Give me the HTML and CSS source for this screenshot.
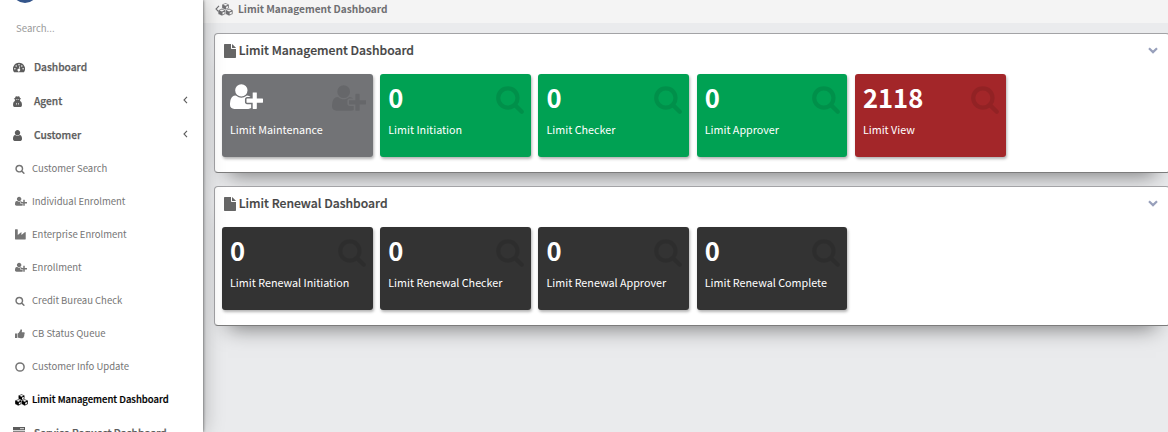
FILE: index.html
```html
<!DOCTYPE html>
<html lang="en">
<head>
<meta charset="utf-8">
<title>Limit Management Dashboard</title>
<link rel="stylesheet" href="styles.css">
</head>
<body>
<svg class="defs" aria-hidden="true">
  <symbol id="search" viewBox="0 0 1792 1792"><path d="M1216 832q0-185-131.500-316.500t-316.500-131.500-316.500 131.500-131.500 316.500 131.500 316.500 316.500 131.500 316.500-131.500 131.500-316.500zm512 832q0 52-38 90t-90 38q-54 0-90-38l-343-342q-179 124-399 124-143 0-273.500-55.500t-225-150-150-225-55.500-273.500 55.500-273.500 150-225 225-150 273.500-55.500 273.500 55.500 225 150 150 225 55.500 273.500q0 220-124 399l343 343q37 37 37 90z"/></symbol>
  <symbol id="user-plus" viewBox="0 0 2048 1792"><path d="M704 896q-159 0-271.500-112.500t-112.500-271.500 112.500-271.500 271.500-112.500 271.500 112.500 112.500 271.500-112.500 271.500-271.500 112.500zm960 128h352q13 0 22.500 9.500t9.500 22.500v192q0 13-9.500 22.500t-22.500 9.500h-352v352q0 13-9.500 22.500t-22.500 9.500h-192q-13 0-22.500-9.500t-9.500-22.500v-352h-352q-13 0-22.500-9.500t-9.500-22.500v-192q0-13 9.500-22.500t22.500-9.500h352v-352q0-13 9.500-22.500t22.500-9.500h192q13 0 22.500 9.500t9.500 22.500v352zm-736 224q0 52 38 90t90 38h256v238q-68 50-171 50h-874q-121 0-194-69t-73-190q0-53 3.500-103.500t14-109 26.500-108.500 43-97.500 62-81 85.500-53.500 111.500-20q19 0 39 17 79 61 154.500 91.500t164.500 30.500 164.500-30.500 154.500-91.500q20-17 39-17 132 0 217 96h-223q-52 0-90 38t-38 90v192z"/></symbol>
  <symbol id="user" viewBox="256 128 1280 1536"><path d="M1536 1399q0 109-62.500 187t-150.500 78h-854q-88 0-150.500-78t-62.500-187q0-85 8.500-160.500t31.500-152 58.500-131 94-89 134.500-34.500q131 128 313 128t313-128q76 0 134.500 34.500t94 89 58.500 131 31.500 152 8.500 160.500zm-256-887q0 159-112.500 271.500t-271.500 112.500-271.500-112.500-112.500-271.500 112.500-271.500 271.500-112.500 271.500 112.500 112.500 271.500z"/></symbol>
  <symbol id="gauge" viewBox="0 1.500 14 12"><path d="M7 2a7 7 0 0 0-5.900 10.800q.2.200.4.200h11q.2 0 .4-.2A7 7 0 0 0 7 2z"/><g fill="#fff"><circle cx="2.200" cy="9" r=".85"/><circle cx="3.700" cy="5.700" r=".85"/><circle cx="7" cy="4.200" r=".85"/><circle cx="10.300" cy="5.700" r=".85"/><circle cx="11.800" cy="9" r=".85"/><path d="M7.500 5.900l.8.200-.7 3a1.600 1.600 0 1 1-.9-.2z"/></g></symbol>
  <symbol id="agent" viewBox="0 0 11 13.500"><path d="M3 .8q.5-.8 1.200-.5.700.3 1.300.3T6.800.3Q7.500 0 8 .8l.5 1.800 1.600.7-1.300.7q.1 1.300-.3 2l1.200.6q1.300 1 1.300 4.300 0 2.600-1.700 2.600H1.700Q0 13.500 0 10.900 0 7.600 1.300 6.600L2.500 6q-.4-.7-.3-2L.9 3.300l1.600-.7z"/><g fill="#fff"><path d="M3.300 4.200h1.900v.8H3.700zM5.800 4.200h1.900l-.4.800H5.800zM3.800 8.400l1.200.8-.5 2.600zM7.200 8.400l-1.200.8.500 2.600z"/></g></symbol>
  <symbol id="industry" viewBox="0 0 12 12"><path d="M0 .8Q0 .4.400.4h2.200q.4 0 .4.400v5.700l4-3.200v3.200l4-3.200q.7-.1.700.4V11q0 .5-.5.500H.5Q0 11.500 0 11z"/></symbol>
  <symbol id="thumb" viewBox="0 0 11 11"><path d="M0 4.900h2.200v5H0zM2.800 5Q4 4.600 4.900 3 5.900 2 6 .8 6.100 0 7 .4q1.400.8.400 3.200h2.400q1 .1.900 1.200 0 .6-.5.900.5.700-.1 1.500.2.800-.4 1.300 0 1.600-1.600 1.600H6.600Q5 10 4 9.700H2.800z"/></symbol>
  <symbol id="circle" viewBox="0 0 10 10"><circle cx="5" cy="5" r="4.100" fill="none" stroke="currentColor" stroke-width="1.500"/></symbol>
  <symbol id="cubes" viewBox="0 0 18 16"><g stroke="var(--cube-gap)" stroke-width=".4" stroke-linejoin="round"><path d="M9 0l4.300 1.900v4.500L9 8.400 4.700 6.400V1.900z"/><path d="M4.600 6.900L9 8.800v4.700l-4.400 2.300-4.600-2.300V8.800z"/><path d="M13.400 6.900L18 8.800v4.700l-4.600 2.300L9 13.500V8.800z"/></g><path fill="var(--cube-gap)" d="M9 1l2.900 1.200L9 3.400 6.100 2.200zM9.700 4.700l2.500-1v2.200l-2.500 1.200zM4.600 8l3 1.200-3 1.300-3-1.300zM5.300 11.800l2.600-1.100v2.200l-2.600 1.400zM13.400 8l3 1.200-3 1.300-3-1.300zM14.100 11.800l2.700-1.100v2.200l-2.700 1.400z"/></symbol>
  <symbol id="server" viewBox="0 0 12 12"><path d="M0 0h12v3.200H0zM0 4.200h12v3.200H0zM0 8.400h12v3.200H0z"/><path stroke="#fff" stroke-width=".8" d="M7 1.700h4M4 5.800h7M8 10h3"/></symbol>
  <symbol id="file" viewBox="0 0 12 14"><path d="M0 .7Q0 0 .7 0H7v4.300q0 .7.700.7H12v8.300q0 .7-.7.700H.7Q0 14 0 13.300zM8 0q.3.100.6.400l3 3q.3.300.4.600H8z"/></symbol>
  <symbol id="left" viewBox="0 0 5 8"><path d="M4 .8L1 4l3 3.200" fill="none" stroke="currentColor" stroke-width="1.100"/></symbol>
  <symbol id="down" viewBox="0 0 10 7"><path d="M1 1.200l4 3.900 4-3.900" fill="none" stroke="currentColor" stroke-width="2.200"/></symbol>
</svg>
<div class="app">
  <aside class="sidebar">
    <div class="brand"><span class="logo"></span></div>
    <div class="search">Search...</div>
    <nav>
      <a class="item"><svg class="ico gauge"><use href="#gauge"/></svg><span>Dashboard</span></a>
      <a class="item"><svg class="ico agent"><use href="#agent"/></svg><span>Agent</span><svg class="left"><use href="#left"/></svg></a>
      <a class="item"><svg class="ico user"><use href="#user"/></svg><span>Customer</span><svg class="left"><use href="#left"/></svg></a>
      <a class="sub"><svg class="ico search-i"><use href="#search"/></svg><span>Customer Search</span></a>
      <a class="sub"><svg class="ico uplus"><use href="#user-plus"/></svg><span>Individual Enrolment</span></a>
      <a class="sub"><svg class="ico industry"><use href="#industry"/></svg><span>Enterprise Enrolment</span></a>
      <a class="sub"><svg class="ico uplus"><use href="#user-plus"/></svg><span>Enrollment</span></a>
      <a class="sub"><svg class="ico search-i"><use href="#search"/></svg><span>Credit Bureau Check</span></a>
      <a class="sub"><svg class="ico thumb"><use href="#thumb"/></svg><span>CB Status Queue</span></a>
      <a class="sub"><svg class="ico circle"><use href="#circle"/></svg><span>Customer Info Update</span></a>
      <a class="sub active"><svg class="ico cubes"><use href="#cubes"/></svg><span>Limit Management Dashboard</span></a>
      <a class="item"><svg class="ico server"><use href="#server"/></svg><span>Service Request Dashboard</span></a>
    </nav>
  </aside>
  <main class="main">
    <header class="topbar"><svg class="back"><use href="#left"/></svg><svg class="cubes"><use href="#cubes"/></svg><span>Limit Management Dashboard</span></header>
    <div class="content">
      <section class="panel">
        <div class="head"><svg class="file"><use href="#file"/></svg><h2>Limit Management Dashboard</h2><svg class="down"><use href="#down"/></svg></div>
        <div class="tiles">
          <div class="tile grey"><svg class="lead"><use href="#user-plus"/></svg><p>Limit Maintenance</p><svg class="ghost wide"><use href="#user-plus"/></svg></div>
          <div class="tile green"><b>0</b><p>Limit Initiation</p><svg class="ghost"><use href="#search"/></svg></div>
          <div class="tile green"><b>0</b><p>Limit Checker</p><svg class="ghost"><use href="#search"/></svg></div>
          <div class="tile green"><b>0</b><p>Limit Approver</p><svg class="ghost"><use href="#search"/></svg></div>
          <div class="tile red"><b>2118</b><p>Limit View</p><svg class="ghost"><use href="#search"/></svg></div>
        </div>
      </section>
      <section class="panel">
        <div class="head"><svg class="file"><use href="#file"/></svg><h2>Limit Renewal Dashboard</h2><svg class="down"><use href="#down"/></svg></div>
        <div class="tiles">
          <div class="tile dark"><b>0</b><p>Limit Renewal Initiation</p><svg class="ghost"><use href="#search"/></svg></div>
          <div class="tile dark"><b>0</b><p>Limit Renewal Checker</p><svg class="ghost"><use href="#search"/></svg></div>
          <div class="tile dark"><b>0</b><p>Limit Renewal Approver</p><svg class="ghost"><use href="#search"/></svg></div>
          <div class="tile dark"><b>0</b><p>Limit Renewal Complete</p><svg class="ghost"><use href="#search"/></svg></div>
        </div>
      </section>
    </div>
  </main>
</div>
</body>
</html>
```
FILE: styles.css
```css
* { box-sizing: border-box; }
body {
  margin: 0;
  overflow: hidden;
  font-family: "Noto Sans CJK SC", "Noto Sans", sans-serif;
  --cube-gap: #fff;
}
svg { fill: currentColor; flex: none; display: block; }
.defs { display: none; }
.app { display: flex; width: 1168px; height: 432px; overflow: hidden; }

.sidebar {
  flex: none;
  width: 203px;
  height: 432px;
  background: #fff;
  position: relative;
  z-index: 1;
  box-shadow: 0 0 3px rgba(0,0,0,.65), 0 0 20px rgba(0,0,0,.28);
}
.brand { height: 8px; overflow: hidden; padding-left: 12px; }
.logo { display: block; width: 26px; height: 26px; margin-top: -23px; border-radius: 50%; background: #34558b; }
.search { height: 42px; line-height: 40px; padding-left: 16px; font-size: 9.600px; color: #999; }
.item, .sub { display: flex; align-items: center; white-space: nowrap; }
.item { height: 34px; padding: 0 15px 0 13px; font-size: 10.200px; font-weight: 500; color: #5c5c5c; -webkit-text-stroke: .25px; }
.item .ico, .sub .ico { margin-right: auto; }
.item span { width: 154px; margin-top: -1px; }
.item .left { margin: -2px 0 0 -5px; }
.sub { height: 33px; padding-left: 15px; font-size: 9.500px; color: #757575; }
.sub span { width: 171px; margin-top: -1px; }
.sub.active { color: #000; font-weight: 500; -webkit-text-stroke: .2px; }
.gauge { width: 12px; height: 11px; }
.agent { width: 9px; height: 11px; }
.user { width: 9px; height: 11px; }
.search-i { width: 10px; height: 10px; }
.uplus { width: 12px; height: 10.500px; }
.industry { width: 11px; height: 11px; }
.thumb, .circle { width: 10px; height: 10px; }
.cubes { width: 13px; height: 12px; }
.server { width: 12px; height: 12px; }
.left { width: 5px; height: 8px; }

.main { flex: 1; min-width: 0; background: #eaebed; }
.topbar {
  display: flex;
  align-items: center;
  height: 23px;
  padding: 0 0 5px 12px;
  background: #f4f4f4;
  --cube-gap: #f4f4f4;
  color: #6f6f72;
  font-size: 10.100px;
  font-weight: 700;
}
.topbar .back { width: 5px; height: 8px; margin-right: -2px; }
.topbar .cubes { width: 15px; height: 13px; margin-right: 5px; }
.topbar span { margin-top: -1px; }
.content { display: flex; flex-direction: column; gap: 13px; padding: 10px 0 0 11px; }
.panel {
  height: 140px;
  width: 956px;
  padding: 0 7px;
  background: #fff;
  border: 1px solid #a3a3a6;
  border-bottom-color: #7c7c7c;
  border-radius: 4px;
  box-shadow: 0 16px 20px -14px rgba(0,0,0,.5);
}
.head { display: flex; align-items: center; height: 33px; padding: 0 4px 0 2px; color: #666; }
.file { width: 12px; height: 14px; }
h2 { flex: 1; margin: -1px 0 0 2.800px; font-size: 12.180px; line-height: 18px; font-weight: 500; color: #444; -webkit-text-stroke: .2px; }
.down { width: 10px; height: 7px; margin-top: -1px; color: #98a0bb; }
.tiles { display: grid; grid-template-columns: repeat(5, 150.800px); column-gap: 7.430px; margin-top: 7px; }
.tile {
  position: relative;
  height: 83px;
  padding: 8px;
  border-radius: 3px;
  color: #fff;
  box-shadow: 1px 2px 3px rgba(0,0,0,.3);
}
.tile b { display: block; height: 34px; line-height: 29px; font-size: 25.600px; }
.tile p { margin: 4px 0 0; font-size: 10.780px; line-height: 18px; white-space: nowrap; }
.lead { width: 33px; height: 29px; margin-bottom: 9px; }
.ghost { position: absolute; top: 10px; right: 6px; width: 30px; height: 30px; color: rgba(0,0,0,.1); }
.ghost.wide { width: 34px; top: 9px; right: 7px; }
.grey { background: #727376; }
.green { background: #00a153; }
.red { background: #a32629; }
.dark { background: #333; }
```
